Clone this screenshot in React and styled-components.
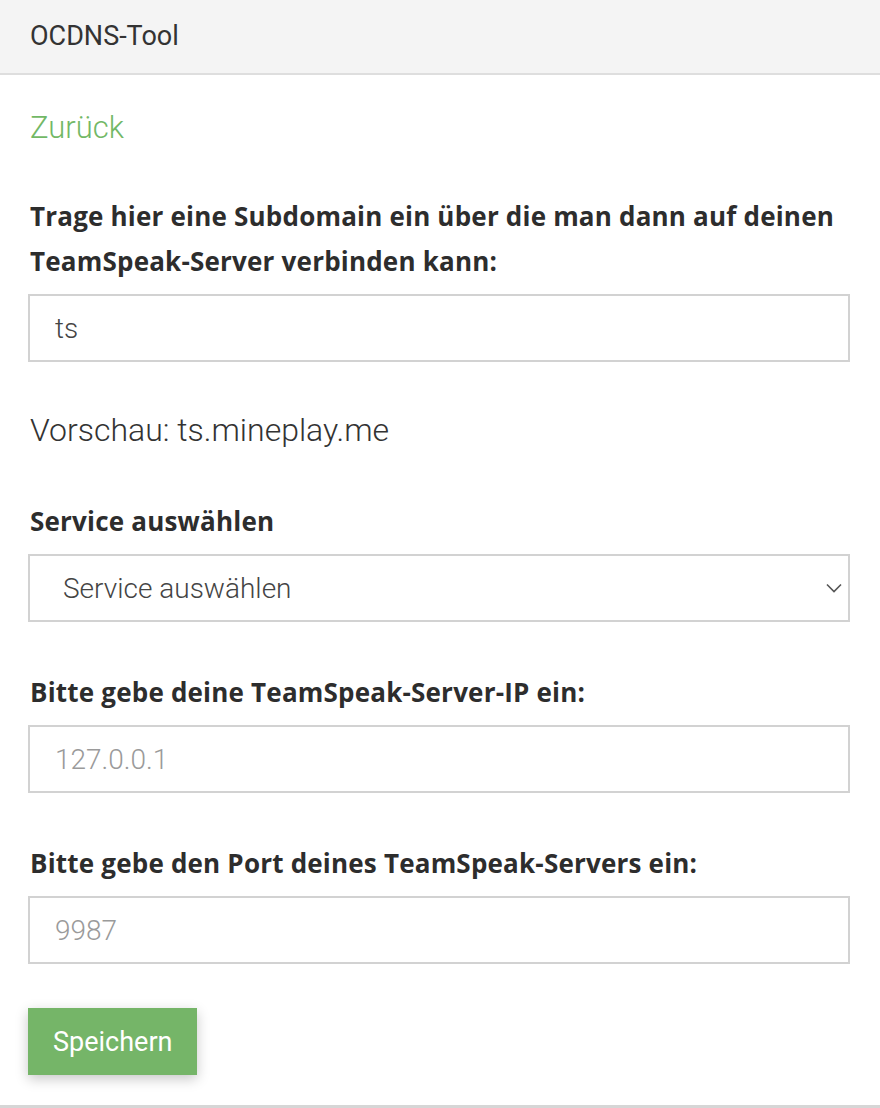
import React, { useState } from 'react'
import styled, { createGlobalStyle } from 'styled-components'

const GlobalStyle = createGlobalStyle`
    html, body {
        margin: 0;
        padding: 0;
        background: #fff;
    }
    * {
        box-sizing: border-box;
    }
`

const App = () => {
    const [subdomain, setSubdomain] = useState('ts')
    const [service, setService] = useState('')

    return (
        <Page>
            <GlobalStyle />
            <Header>OCDNS-Tool</Header>

            <Content>
                <BackLink href="#">Zurück</BackLink>

                <Field>
                    <Label>Trage hier eine Subdomain ein über die man dann auf deinen TeamSpeak-Server verbinden kann:</Label>
                    <Input value={subdomain} onChange={(e) => setSubdomain(e.target.value)} />
                </Field>

                <Preview>Vorschau: {subdomain}.mineplay.me</Preview>

                <Field>
                    <Label>Service auswählen</Label>
                    <SelectWrap>
                        <Select value={service} onChange={(e) => setService(e.target.value)}>
                            <option value="">Service auswählen</option>
                            <option value="ts3">TeamSpeak 3</option>
                        </Select>
                        <Chevron viewBox="0 0 16 10">
                            <path d="M1 1.5 L8 8.5 L15 1.5" fill="none" stroke="#555" strokeWidth="1.6" />
                        </Chevron>
                    </SelectWrap>
                </Field>

                <Field spaced>
                    <Label>Bitte gebe deine TeamSpeak-Server-IP ein:</Label>
                    <Input placeholder="127.0.0.1" />
                </Field>

                <Field spaced>
                    <Label>Bitte gebe den Port deines TeamSpeak-Servers ein:</Label>
                    <Input placeholder="9987" />
                </Field>

                <SaveButton type="button">Speichern</SaveButton>
            </Content>
        </Page>
    )
}

export default App

const Page = styled.div`
    width: 100%;
    min-height: 1108px;
    display: flex;
    flex-direction: column;
    border-bottom: 3px solid #d6d6d6;
    font-family: Roboto, "Liberation Sans", sans-serif;
    color: #333;
`

const Header = styled.div`
    height: 75px;
    display: flex;
    align-items: center;
    padding: 0 30px 2px;
    background: #f4f4f4;
    border-bottom: 2px solid #dedede;
    font-family: "Liberation Sans Narrow", Roboto, sans-serif;
    font-size: 27px;
    color: #333;
`

const Content = styled.div`
    flex-grow: 1;
    display: flex;
    flex-direction: column;
    align-items: flex-start;
    padding: 33px 30px 0 28px;
`

const BackLink = styled.a`
    display: block;
    padding-left: 2px;
    line-height: 40px;
    font-size: 31px;
    font-weight: 300;
    color: #72b866;
    text-decoration: none;
    margin-bottom: 46px;
`

const Field = styled.div`
    width: 100%;
    display: flex;
    flex-direction: column;
    margin-top: ${(props) => (props.spaced ? '48px' : '0')};
`

const Label = styled.label`
    padding-left: 2px;
    font-family: "Open Sans", Roboto, sans-serif;
    font-size: 26px;
    font-weight: 700;
    letter-spacing: 0.2px;
    line-height: 45px;
    color: #2d2d2d;
    margin-bottom: 10px;
`

const Input = styled.input`
    width: 100%;
    height: 68px;
    border: 2px solid #d2d2d2;
    padding: 0 25px;
    font-family: Roboto, sans-serif;
    font-size: 28px;
    font-weight: 300;
    color: #444;
    outline: none;

    &::placeholder {
        color: #9a9a9a;
    }
`

const Preview = styled.p`
    margin: 48px 0 49px;
    padding-left: 2px;
    font-size: 32px;
    font-weight: 300;
    line-height: 40px;
    color: #333;
`

const SelectWrap = styled.div`
    position: relative;
    width: 100%;
`

const Select = styled.select`
    width: 100%;
    height: 68px;
    border: 2px solid #d2d2d2;
    padding: 0 33px;
    background: #fff;
    appearance: none;
    border-radius: 0;
    font-family: Roboto, sans-serif;
    font-size: 28px;
    font-weight: 300;
    color: #444;
    outline: none;
`

const Chevron = styled.svg`
    position: absolute;
    right: 8px;
    top: 29px;
    width: 16px;
    height: 10px;
    pointer-events: none;
`

const SaveButton = styled.button`
    margin-top: 44px;
    height: 67px;
    padding: 0 25px;
    border: none;
    background: #75b568;
    color: #fff;
    font-family: "Liberation Sans Narrow", Roboto, sans-serif;
    font-size: 27px;
    box-shadow: 0 4px 12px rgba(0, 0, 0, 0.22);
    cursor: pointer;
`
